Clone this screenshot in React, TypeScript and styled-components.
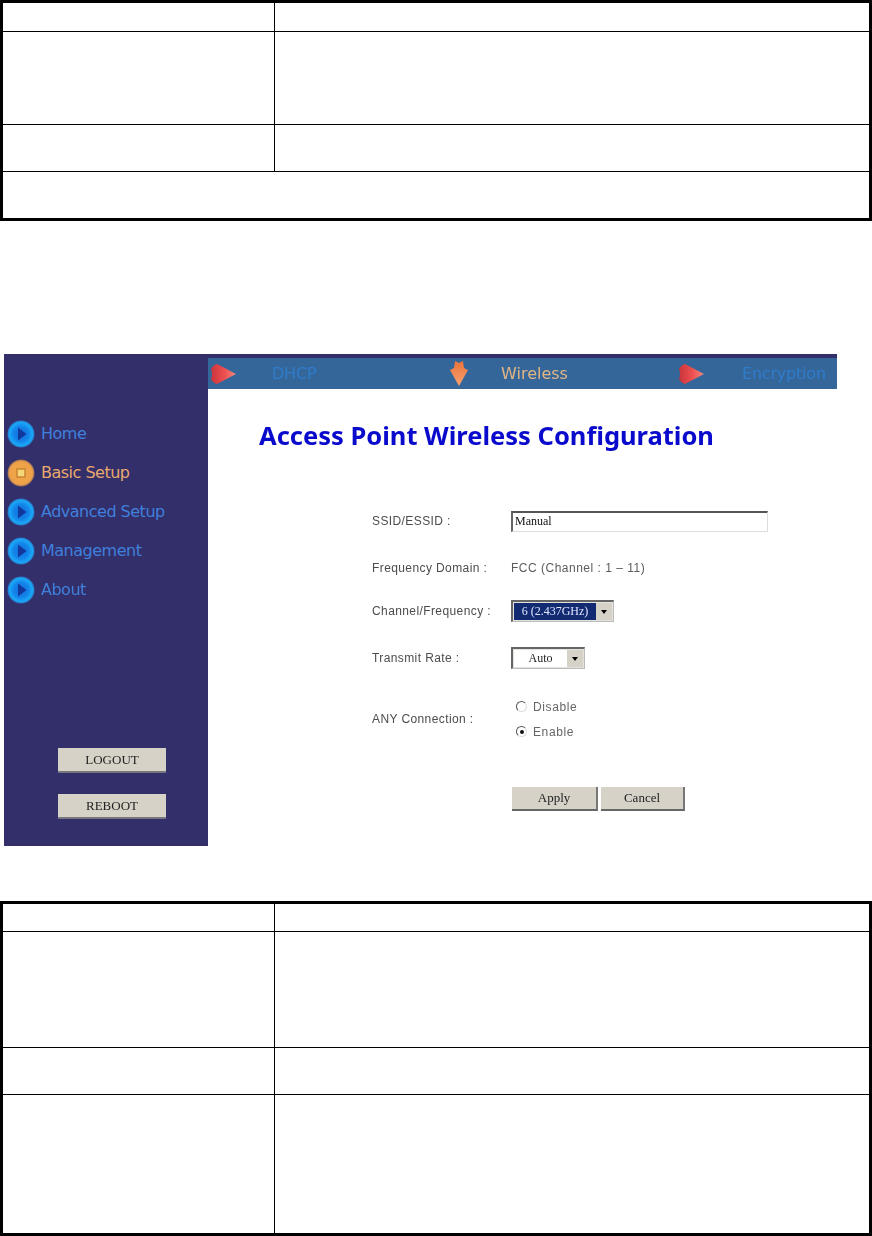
import React from 'react';
import styled, { createGlobalStyle } from 'styled-components';

const Global = createGlobalStyle`
	html, body {
		margin: 0;
		padding: 0;
		background: #fff;
		font-family: "Liberation Sans", Arial, sans-serif;
	}
	* {
		box-sizing: border-box;
	}
`;

const Page = styled.div`
	width: 872px;
	height: 1236px;
	overflow: hidden;
`;

const InfoTable = styled.div<{ $rows: string }>`
	display: grid;
	grid-template-columns: 271px 1fr;
	grid-template-rows: ${(p) => p.$rows};
	border: 3px solid #000;
	width: 872px;
`;

const Cell = styled.div<{ $first?: boolean; $wide?: boolean }>`
	grid-column: ${(p) => (p.$wide ? '1 / span 2' : 'auto')};
	border-top: ${(p) => (p.$first ? 'none' : '1px solid #000')};
`;

const RightCell = styled(Cell)`
	border-left: 1px solid #000;
`;

const Shot = styled.div`
	display: flex;
	width: 833px;
	height: 492px;
	margin: 133px 0 55px 4px;
	filter: blur(0.7px);
`;

const Sidebar = styled.aside`
	display: flex;
	flex: 0 0 204px;
	flex-direction: column;
	padding-top: 60px;
	background: #332f6b;
`;

const Menu = styled.nav`
	display: flex;
	flex-direction: column;
`;

const MenuItem = styled.div<{ $active?: boolean }>`
	display: flex;
	align-items: center;
	gap: 6px;
	height: 39px;
	padding-left: 3px;
	font-family: "DejaVu Sans", sans-serif;
	font-size: 16px;
	letter-spacing: -0.5px;
	color: ${(p) => (p.$active ? '#e9a96c' : '#3f80dc')};
`;

const SideButtons = styled.div`
	display: flex;
	flex-direction: column;
	gap: 21px;
	margin-top: 139px;
	padding-left: 54px;
`;

const SideButton = styled.button`
	width: 108px;
	height: 25px;
	padding: 0;
	border: none;
	border-bottom: 2px solid #77767c;
	background: #d6d2c8;
	font-family: "Liberation Serif", serif;
	font-size: 13px;
	color: #222;
`;

const Main = styled.main`
	display: flex;
	flex: 1;
	flex-direction: column;
	min-width: 0;
`;

const TopStrip = styled.div`
	height: 4px;
	background: #332f6b;
`;

const TabBar = styled.div`
	display: grid;
	grid-template-columns: repeat(3, 234px);
	align-items: center;
	height: 31px;
	padding-left: 2px;
	background: #346699;
`;

const Tab = styled.div`
	display: flex;
	align-items: center;
`;

const TabLabel = styled.span<{ $offset: number; $active?: boolean }>`
	margin-left: ${(p) => p.$offset}px;
	font-family: "DejaVu Sans", sans-serif;
	font-size: 16px;
	letter-spacing: ${(p) => (p.$active ? '0' : '-0.2px')};
	color: ${(p) => (p.$active ? '#e2b585' : '#2f7ccb')};
`;

const Title = styled.h1`
	margin: 30px 0 0 51px;
	font-family: "Noto Sans", sans-serif;
	font-size: 25.5px;
	line-height: 32px;
	font-weight: 700;
	white-space: nowrap;
	color: #0a0acc;
`;

const Form = styled.form`
	display: flex;
	flex-direction: column;
	padding-left: 164px;
`;

const Row = styled.div<{ $top: number; $height?: number }>`
	display: grid;
	grid-template-columns: 139px 1fr;
	align-items: center;
	height: ${(p) => p.$height ?? 22}px;
	margin-top: ${(p) => p.$top}px;
`;

const Label = styled.label`
	font-size: 12px;
	letter-spacing: 0.4px;
	color: #4c4c4c;
	white-space: nowrap;
`;

const Value = styled.span`
	font-size: 12px;
	letter-spacing: 0.5px;
	color: #5c5c5c;
`;

const TextInput = styled.input`
	width: 257px;
	height: 21px;
	padding: 0 2px;
	border: 1px solid #ddd;
	border-top: 2px solid #555;
	border-left: 2px solid #666;
	background: #fff;
	font-family: "Liberation Serif", serif;
	font-size: 12px;
	color: #111;
	outline: none;
`;

const Select = styled.div<{ $width: number }>`
	display: flex;
	align-items: stretch;
	width: ${(p) => p.$width}px;
	height: 22px;
	padding: 1px;
	border: 1px solid #bbb;
	border-top: 2px solid #666;
	border-left: 2px solid #666;
	background: #e4e2dc;
`;

const SelectValue = styled.div<{ $selected?: boolean }>`
	flex: 1;
	text-align: center;
	line-height: 17px;
	font-family: "Liberation Serif", serif;
	font-size: 12px;
	background: ${(p) => (p.$selected ? '#122a72' : '#fff')};
	color: ${(p) => (p.$selected ? '#dfe6ff' : '#222')};
`;

const SelectArrow = styled.div`
	display: flex;
	align-items: center;
	justify-content: center;
	width: 16px;
	background: #d6d2c8;
	&::after {
		content: '';
		border: 3px solid transparent;
		border-top: 4px solid #000;
		border-bottom: none;
	}
`;

const Radios = styled.div`
	display: flex;
	flex-direction: column;
	gap: 9px;
	padding-left: 5px;
`;

const RadioLine = styled.div`
	display: flex;
	align-items: center;
	gap: 6px;
	height: 16px;
	font-size: 12px;
	letter-spacing: 0.6px;
	color: #666;
`;

const RadioDot = styled.span<{ $on?: boolean }>`
	position: relative;
	width: 11px;
	height: 11px;
	border-radius: 50%;
	border: 1px solid #ddd;
	border-top-color: #555;
	border-left-color: #555;
	background: #fff;
	&::after {
		content: '';
		display: ${(p) => (p.$on ? 'block' : 'none')};
		position: absolute;
		left: 2.5px;
		top: 2.5px;
		width: 4px;
		height: 4px;
		border-radius: 50%;
		background: #111;
	}
`;

const Actions = styled.div`
	display: flex;
	gap: 3px;
	margin: 43px 0 0 140px;
`;

const ActionButton = styled.button<{ $width: number }>`
	width: ${(p) => p.$width}px;
	height: 24px;
	padding: 0;
	border: none;
	border-right: 2px solid #777;
	border-bottom: 2px solid #666;
	background: #d6d2c8;
	font-family: "Liberation Serif", serif;
	font-size: 13px;
	color: #222;
`;

const ArrowSlot = styled.svg`
	margin-left: 6px;
`;

const BallIcon = ({ id, active }: { id: string; active?: boolean }) => (
	<svg width="28" height="28" viewBox="0 0 28 28">
		<defs>
			<radialGradient id={id} cx="50%" cy="50%" r="50%">
				<stop offset="0%" stopColor={active ? '#eea545' : '#0f6fdc'} />
				<stop offset="55%" stopColor={active ? '#f0a448' : '#1384ea'} />
				<stop offset="85%" stopColor={active ? '#eea04a' : '#1aa8f6'} />
				<stop offset="100%" stopColor={active ? '#8d6a5c' : '#2a6fc0'} />
			</radialGradient>
		</defs>
		<circle cx="14" cy="14" r="13.5" fill={`url(#${id})`} />
		{active ? (
			<rect x="10" y="10" width="8" height="8" fill="#f4d878" stroke="#c98434" strokeWidth="1.5" />
		) : (
			<path d="M11 7.5 L19.5 14 L11 20.5 Z" fill="#13389c" />
		)}
	</svg>
);

const RightArrow = () => (
	<svg width="26" height="22" viewBox="0 0 26 22">
		<defs>
			<linearGradient id="redArrow" x1="0" x2="1" y1="0" y2="0">
				<stop offset="0%" stopColor="#c9343c" />
				<stop offset="55%" stopColor="#ee5050" />
				<stop offset="100%" stopColor="#f08a80" />
			</linearGradient>
		</defs>
		<path d="M1 6 Q3 2 7 1 L26 11 L7 21 Q3 20 1 16 Q3 11 1 6 Z" fill="url(#redArrow)" />
	</svg>
);

const DownArrow = () => (
	<ArrowSlot width="18" height="25" viewBox="0 0 18 25">
		<defs>
			<linearGradient id="orangeArrow" x1="0" x2="0" y1="0" y2="1">
				<stop offset="0%" stopColor="#e8743c" />
				<stop offset="100%" stopColor="#fba070" />
			</linearGradient>
		</defs>
		<path d="M5 0 L9 2 L13 0 L14 7 L18 9 L9 25 L0 9 L4 7 Z" fill="url(#orangeArrow)" />
	</ArrowSlot>
);

const menu = ['Home', 'Basic Setup', 'Advanced Setup', 'Management', 'About'];

const App: React.FC = () => {
	return (
		<Page>
			<Global />
			<InfoTable $rows="28px 93px 47px 47px">
				<Cell $first />
				<RightCell $first />
				<Cell />
				<RightCell />
				<Cell />
				<RightCell />
				<Cell $wide />
			</InfoTable>
			<Shot>
				<Sidebar>
					<Menu>
						{menu.map((name, i) => (
							<MenuItem key={name} $active={i === 1}>
								<BallIcon id={`ball${i}`} active={i === 1} />
								{name}
							</MenuItem>
						))}
					</Menu>
					<SideButtons>
						<SideButton>LOGOUT</SideButton>
						<SideButton>REBOOT</SideButton>
					</SideButtons>
				</Sidebar>
				<Main>
					<TopStrip />
					<TabBar>
						<Tab>
							<RightArrow />
							<TabLabel $offset={36}>DHCP</TabLabel>
						</Tab>
						<Tab>
							<DownArrow />
							<TabLabel $offset={33} $active>
								Wireless
							</TabLabel>
						</Tab>
						<Tab>
							<RightArrow />
							<TabLabel $offset={38}>Encryption</TabLabel>
						</Tab>
					</TabBar>
					<Title>Access Point Wireless Configuration</Title>
					<Form>
						<Row $top={59}>
							<Label>SSID/ESSID :</Label>
							<TextInput readOnly value="Manual" />
						</Row>
						<Row $top={25}>
							<Label>Frequency Domain :</Label>
							<Value>FCC (Channel : 1 – 11)</Value>
						</Row>
						<Row $top={21}>
							<Label>Channel/Frequency :</Label>
							<Select $width={103}>
								<SelectValue $selected>6 (2.437GHz)</SelectValue>
								<SelectArrow />
							</Select>
						</Row>
						<Row $top={25}>
							<Label>Transmit Rate :</Label>
							<Select $width={74}>
								<SelectValue>Auto</SelectValue>
								<SelectArrow />
							</Select>
						</Row>
						<Row $top={25} $height={50}>
							<Label>ANY Connection :</Label>
							<Radios>
								<RadioLine>
									<RadioDot />
									Disable
								</RadioLine>
								<RadioLine>
									<RadioDot $on />
									Enable
								</RadioLine>
							</Radios>
						</Row>
						<Actions>
							<ActionButton type="button" $width={86}>
								Apply
							</ActionButton>
							<ActionButton type="button" $width={84}>
								Cancel
							</ActionButton>
						</Actions>
					</Form>
				</Main>
			</Shot>
			<InfoTable $rows="27px 116px 47px 139px">
				<Cell $first />
				<RightCell $first />
				<Cell />
				<RightCell />
				<Cell />
				<RightCell />
				<Cell />
				<RightCell />
			</InfoTable>
		</Page>
	);
};

export default App;
